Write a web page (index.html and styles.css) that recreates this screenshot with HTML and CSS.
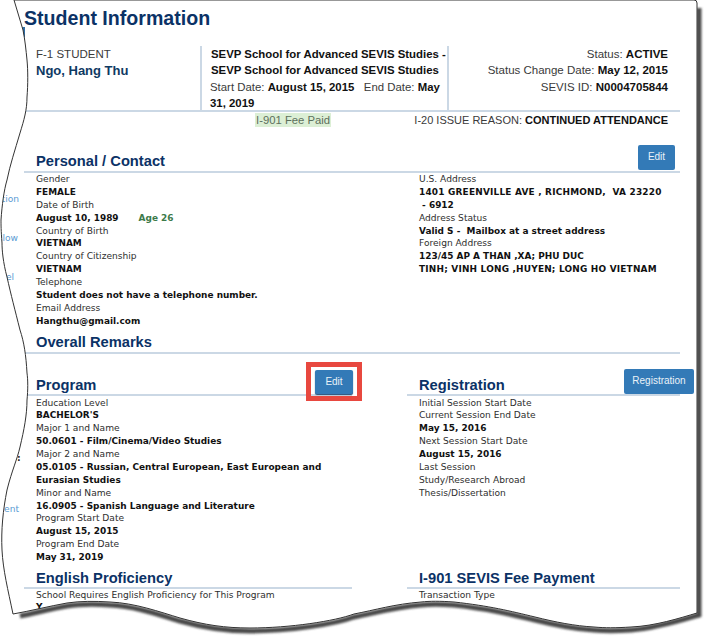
FILE: index.html
```html
<!DOCTYPE html>
<html lang="en">
<head>
<meta charset="utf-8">
<title>Student Information</title>
<link rel="stylesheet" href="styles.css">
</head>
<body>
<div class="page">
  <span class="frag frag-tab"></span>
  <span class="frag frag-1">tion</span>
  <span class="frag frag-2">llow</span>
  <span class="frag frag-3">el</span>
  <span class="frag frag-4">:</span>
  <span class="frag frag-5">ent</span>

  <main class="sheet">
    <h1 class="title">Student Information</h1>

    <section class="summary">
      <div class="sum-col sum-student">
        <div>F-1 STUDENT</div>
        <div class="student-name">Ngo, Hang Thu</div>
      </div>
      <div class="sum-col sum-school">
        <div class="strong wide">SEVP School for Advanced SEVIS Studies -</div>
        <div class="strong wide">SEVP School for Advanced SEVIS Studies</div>
        <div class="dates">Start Date: <b>August 15, 2015</b> &nbsp; End Date: <b>May 31, 2019</b></div>
      </div>
      <div class="sum-col sum-status">
        <div>Status: <b>ACTIVE</b></div>
        <div>Status Change Date: <b>May 12, 2015</b></div>
        <div>SEVIS ID: <b>N0004705844</b></div>
      </div>
    </section>

    <div class="fee-row">
      <span class="fee-paid">I-901 Fee Paid</span>
      <span class="issue">I-20 ISSUE REASON: <b>CONTINUED ATTENDANCE</b></span>
    </div>

    <header class="sec-head sec-personal">
      <h2>Personal / Contact</h2>
      <a class="btn btn-personal">Edit</a>
    </header>
    <div class="cols">
      <div class="fields">
        <div>Gender</div>
        <b>FEMALE</b>
        <div>Date of Birth</div>
        <div><b>August 10, 1989</b><b class="age">Age 26</b></div>
        <div>Country of Birth</div>
        <b>VIETNAM</b>
        <div>Country of Citizenship</div>
        <b>VIETNAM</b>
        <div>Telephone</div>
        <b>Student does not have a telephone number.</b>
        <div>Email Address</div>
        <b>Hangthu@gmail.com</b>
      </div>
      <div class="fields">
        <div>U.S. Address</div>
        <b><span class="caps">1401 GREENVILLE AVE , RICHMOND, &nbsp;VA 23220</span><br>&nbsp;- 6912</b>
        <div>Address Status</div>
        <b>Valid S - &nbsp;Mailbox at a street address</b>
        <div>Foreign Address</div>
        <b>123/45 AP A THAN ,XA; PHU DUC<br><span class="caps">TINH; VINH LONG ,HUYEN; LONG HO VIETNAM</span></b>
      </div>
    </div>

    <header class="sec-head sec-remarks">
      <h2>Overall Remarks</h2>
    </header>

    <div class="pair pair-program">
      <section>
        <header class="sec-head sec-tall">
          <h2>Program</h2>
          <a class="btn btn-program">Edit</a>
        </header>
        <div class="fields fields-gap">
          <div>Education Level</div>
          <b>BACHELOR'S</b>
          <div>Major 1 and Name</div>
          <b>50.0601 - Film/Cinema/Video Studies</b>
          <div>Major 2 and Name</div>
          <b>05.0105 - Russian, Central European, East European and<br>Eurasian Studies</b>
          <div>Minor and Name</div>
          <b>16.0905 - Spanish Language and Literature</b>
          <div>Program Start Date</div>
          <b>August 15, 2015</b>
          <div>Program End Date</div>
          <b>May 31, 2019</b>
        </div>
      </section>
      <section>
        <header class="sec-head sec-tall">
          <h2>Registration</h2>
          <a class="btn btn-reg">Registration</a>
        </header>
        <div class="fields fields-gap">
          <div>Initial Session Start Date</div>
          <div>Current Session End Date</div>
          <b>May 15, 2016</b>
          <div>Next Session Start Date</div>
          <b>August 15, 2016</b>
          <div>Last Session</div>
          <div>Study/Research Abroad</div>
          <div>Thesis/Dissertation</div>
        </div>
      </section>
    </div>

    <div class="pair pair-bottom">
      <section>
        <header class="sec-head"><h2>English Proficiency</h2></header>
        <div class="fields">
          <div>School Requires English Proficiency for This Program</div>
          <b>Y</b>
        </div>
      </section>
      <section>
        <header class="sec-head"><h2>I-901 SEVIS Fee Payment</h2></header>
        <div class="fields">
          <div>Transaction Type</div>
        </div>
      </section>
    </div>
  </main>

  <svg class="torn" viewBox="0 0 708 637" width="708" height="637" aria-hidden="true">
    <defs>
      <clipPath id="outside">
        <path clip-rule="evenodd" d="M0 0H708V637H0Z M14 0L694 0Q697 0 697 3L697 613C680 618 655 626 631 627C615 628 605 628 594 627C575 626 555 622 535 617C510 611 490 606 454 602C440 601 430 601 421 602C395 604 375 610 354 614C335 621 290 628 250 628C225 628 205 625 180 618C160 612 135 603 110 602C95 601 80 601 67 603C50 606 30 611 13 614C8 590 3 570 2 550C1 530 3 510 7 490C12 470 17 460 20 447C24 430 27 415 27 400C28 390 28 380 27 373C26 355 24 342 20 330C15 310 11 295 7 277C3 262 2 250 2 243C1 230 1 225 1 220C2 205 4 190 7 180C10 165 15 150 20 133C24 120 27 110 27 97C28 85 28 70 27 60C26 50 25 40 23 30C20 20 17 10 14 0Z"/>
      </clipPath>
      <filter id="soft" x="-5%" y="-5%" width="110%" height="110%">
        <feGaussianBlur stdDeviation="0.9"/>
      </filter>
    </defs>
    <path class="torn-white" fill-rule="evenodd" d="M0 0H708V637H0Z M14 0L694 0Q697 0 697 3L697 613C680 618 655 626 631 627C615 628 605 628 594 627C575 626 555 622 535 617C510 611 490 606 454 602C440 601 430 601 421 602C395 604 375 610 354 614C335 621 290 628 250 628C225 628 205 625 180 618C160 612 135 603 110 602C95 601 80 601 67 603C50 606 30 611 13 614C8 590 3 570 2 550C1 530 3 510 7 490C12 470 17 460 20 447C24 430 27 415 27 400C28 390 28 380 27 373C26 355 24 342 20 330C15 310 11 295 7 277C3 262 2 250 2 243C1 230 1 225 1 220C2 205 4 190 7 180C10 165 15 150 20 133C24 120 27 110 27 97C28 85 28 70 27 60C26 50 25 40 23 30C20 20 17 10 14 0Z"/>
    <g clip-path="url(#outside)">
      <path class="torn-shadow" filter="url(#soft)" d="M699 8L699 615C682 620 657 628 631 630C615 631 605 631 594 630C575 629 555 625 535 620C510 614 490 609 454 605C440 604 430 604 421 605C395 607 375 613 354 617C335 624 290 631 250 631C225 631 205 628 180 621C160 615 135 606 110 605C95 604 80 604 67 606C50 609 35 613 20 616"/>
    </g>
    <path class="torn-line" d="M14 0L694 0Q697 0 697 3L697 613C680 618 655 626 631 627C615 628 605 628 594 627C575 626 555 622 535 617C510 611 490 606 454 602C440 601 430 601 421 602C395 604 375 610 354 614C335 621 290 628 250 628C225 628 205 625 180 618C160 612 135 603 110 602C95 601 80 601 67 603C50 606 30 611 13 614C8 590 3 570 2 550C1 530 3 510 7 490C12 470 17 460 20 447C24 430 27 415 27 400C28 390 28 380 27 373C26 355 24 342 20 330C15 310 11 295 7 277C3 262 2 250 2 243C1 230 1 225 1 220C2 205 4 190 7 180C10 165 15 150 20 133C24 120 27 110 27 97C28 85 28 70 27 60C26 50 25 40 23 30C20 20 17 10 14 0Z"/>
  </svg>
</div>
</body>
</html>
```
FILE: styles.css
```css
* { box-sizing: border-box; }
html, body { margin: 0; padding: 0; background: #fff; }
.page {
  position: relative;
  width: 708px;
  height: 637px;
  overflow: hidden;
  font-family: "Liberation Sans", Arial, sans-serif;
  font-size: 11.5px;
  color: #3a3a3a;
}
.sheet { width: 656px; margin-left: 24px; }
b, .strong { font-weight: 700; color: #111; }

.title {
  margin: 0;
  height: 46px;
  padding-top: 6px;
  font-size: 19.6px;
  line-height: 24px;
  font-weight: 700;
  color: #0b3266;
}

.summary {
  display: grid;
  grid-template-columns: 176px 249px 231px;
  height: 66px;
  border-bottom: 2px solid #cbd8e5;
  line-height: 16.4px;
}
.sum-student { padding-left: 12px; }
.student-name { font-size: 13px; font-weight: 700; color: #0f3a63; line-height: 18px; }
.sum-school { padding-left: 8px; border-left: 2px solid #cbd8e5; border-right: 2px solid #cbd8e5; }
.wide { white-space: nowrap; font-size: 11.4px; padding-left: 1px; }
.dates { font-size: 11.4px; }
.sum-status { padding-right: 12px; text-align: right; }

.fee-row {
  display: flex;
  justify-content: space-between;
  height: 34px;
  padding: 0 12px 0 231px;
  line-height: 16px;
}
.fee-paid { align-self: flex-start; padding: 0 1px; background: #dcefd5; color: #5c6f5c; line-height: 14px; margin-top: 1px; font-size: 11.3px; }
.issue { font-size: 11px; }

.sec-head {
  display: flex;
  justify-content: space-between;
  align-items: flex-end;
  border-bottom: 2px solid #cbd8e5;
  padding-left: 12px;
}
.sec-head h2 {
  margin: 0;
  font-size: 14.7px;
  line-height: 18px;
  font-weight: 700;
  color: #0b3266;
}
.sec-personal { height: 27px; }
.sec-personal h2, .sec-remarks h2 { margin-bottom: 1px; }
.sec-remarks { height: 19px; margin-top: 7px; }
.sec-tall { height: 31px; }

.btn {
  display: block;
  height: 25px;
  border-radius: 2px;
  background: #337ab7;
  color: #eaf2f8;
  font-size: 10px;
  line-height: 23px;
  text-align: center;
}
.btn-personal { width: 37px; margin: 0 5px 1px 0; }
.btn-program {
  position: relative;
  width: 38px;
  height: 24px;
  margin-right: -1px;
  box-shadow: 0 1px 1px #234f78;
}
.btn-program::after {
  content: "";
  position: absolute;
  inset: -8px -9px -7px -9px;
  border: 5px solid #e8483f;
}
.btn-reg { width: 70px; margin-right: -14px; }

.cols {
  display: grid;
  grid-template-columns: 395px 261px;
}
.cols > .fields + .fields { padding-left: 0; }

.fields {
  padding: 0 0 0 12px;
  font-family: "DejaVu Sans", Verdana, sans-serif;
  font-size: 9.1px;
  line-height: 12.87px;
  color: #2e2e2e;
}
.fields-gap { padding-top: 1px; }
.fields b { display: block; font-size: 8.95px; }
.fields div b { display: inline; }
.fields .age { margin-left: 20px; color: #3d7a4a; }
.caps { letter-spacing: 0.2px; }

.pair { display: grid; grid-template-columns: 328px 273px; column-gap: 55px; }
.pair-program { margin-top: 11px; height: 204px; }

.frag {
  position: absolute;
  font-family: "DejaVu Sans", Verdana, sans-serif;
  font-size: 9.1px;
  line-height: 12px;
  color: #5a9bd4;
}
.frag-tab { left: 22px; top: 27px; width: 3px; height: 13px; background: #2f6fa8; }
.frag-1 { right: 689px; top: 193px; }
.frag-2 { right: 690px; top: 232px; }
.frag-3 { right: 694px; top: 271px; }
.frag-4 { left: 17px; top: 452px; color: #222; font-weight: 700; }
.frag-5 { right: 689px; top: 503px; }

.torn { position: absolute; left: 0; top: 0; display: block; pointer-events: none; }
.torn-white { fill: #fff; }
.torn-line { fill: none; stroke: #333; stroke-width: 1; }
.torn-shadow { fill: none; stroke: #4a4a4a; stroke-width: 5; }
```
